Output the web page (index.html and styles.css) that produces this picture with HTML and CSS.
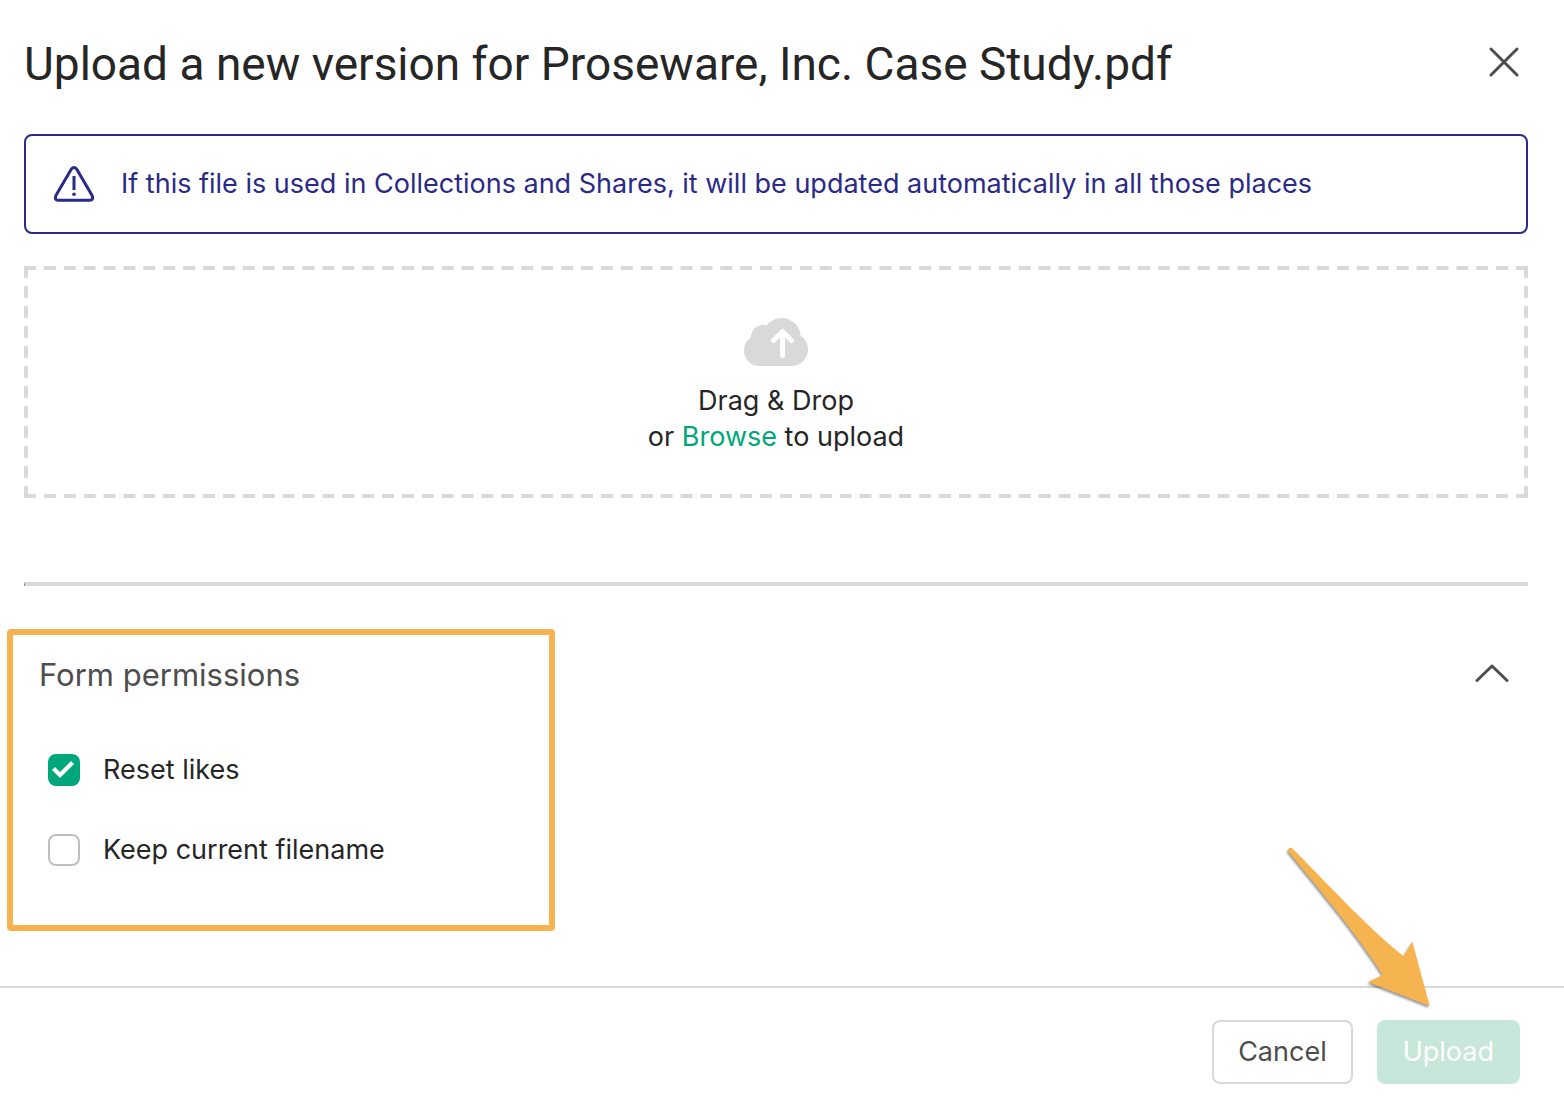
FILE: index.html
```
<!DOCTYPE html>
<html lang="en">
<head>
<meta charset="utf-8">
<meta name="viewport" content="width=device-width, initial-scale=1">
<title>Upload a new version</title>
<link rel="stylesheet" href="styles.css">
</head>
<body>
<main class="dialog">
  <header class="dialog-header">
    <h1 class="title">Upload a new version for Proseware, Inc. Case Study.pdf</h1>
    <button class="icon-button" type="button" aria-label="Close">
      <svg width="32" height="32" viewBox="0 0 32 32" fill="none" stroke="currentColor" stroke-width="3" stroke-linecap="round"><path d="M3 3 29 29M29 3 3 29"/></svg>
    </button>
  </header>

  <div class="content">
    <p class="notice">
      <svg class="notice-icon" width="42" height="38" viewBox="0 0 42 38" fill="none" stroke="currentColor" stroke-width="3" stroke-linejoin="round"><path d="M18.400 4 2.900 30.600Q1.200 35.300 5.200 35.300H36.800Q40.800 35.300 39.100 30.600L23.600 4Q21 .8 18.400 4Z"/><path d="M21 11v14" stroke-linecap="butt"/><circle cx="21" cy="29.300" r="1.800" fill="currentColor" stroke="none"/></svg>
      If this file is used in Collections and Shares, it will be updated automatically in all those places
    </p>

    <section class="dropzone">
      <svg class="dropzone-outline" width="100%" height="100%" aria-hidden="true">
        <line x1="0" y1="0" x2="100%" y2="0" pathLength="1512"/>
        <line x1="0" y1="100%" x2="100%" y2="100%" pathLength="1512"/>
        <line x1="0" y1="0" x2="0" y2="100%" pathLength="232"/>
        <line x1="100%" y1="0" x2="100%" y2="100%" pathLength="232"/>
      </svg>
      <svg width="64" height="48" viewBox="0 0 64 48">
        <g fill="#d9d9d9"><circle cx="15.500" cy="32.500" r="15.500"/><circle cx="19" cy="19" r="12"/><circle cx="37.700" cy="19" r="19"/><circle cx="47.500" cy="31.500" r="16.500"/><path d="M15 20H48V48H15Z"/></g>
        <path d="M38.500 37.500V14M29.500 22.500 38.500 13.500 47.500 22.500" fill="none" stroke="#fff" stroke-width="5" stroke-linecap="round" stroke-linejoin="round"/>
      </svg>
      <p class="dropzone-text">Drag &amp; Drop<br>or <a class="link" href="#">Browse</a> to upload</p>
    </section>

    <hr class="divider">

    <div class="permissions">
      <fieldset class="options">
        <legend class="options-title">Form permissions</legend>
        <label class="option"><input class="checkbox" type="checkbox" checked>Reset likes</label>
        <label class="option"><input class="checkbox" type="checkbox">Keep current filename</label>
      </fieldset>
      <button class="icon-button" type="button" aria-label="Collapse form permissions">
        <svg width="36" height="20" viewBox="0 0 36 20" fill="none" stroke="currentColor" stroke-width="3" stroke-linecap="round" stroke-linejoin="round"><path d="M3 17.500 18 3 33 17.500"/></svg>
      </button>
    </div>
  </div>

  <footer class="dialog-footer">
    <button class="button" type="button">Cancel</button>
    <button class="button button-primary" type="button" disabled>Upload</button>
    <svg class="pointer" width="160" height="170" viewBox="0 0 160 170" aria-hidden="true"><path fill="#f5b450" d="M8.300 10.500C7 7.500 10.500 5.500 13 8C60 56 92 90 123.500 115L132.300 100.500 149.700 165 88 141 102.700 134C78 95 43 53 8.300 10.500Z"/></svg>
  </footer>
</main>
</body>
</html>
```
FILE: styles.css
```
* {
  box-sizing: border-box;
}

body {
  margin: 0;
  background: #fff;
  color: #262626;
  font: 27px/36px Inter, "Liberation Sans", sans-serif;
}

.dialog {
  display: flex;
  flex-direction: column;
  min-height: 100vh;
}

.dialog-header {
  display: flex;
  align-items: flex-start;
  justify-content: space-between;
  padding: 32px 44px 38px 24px;
}

.dialog-header .icon-button {
  padding-top: 14px;
}

.title {
  margin: 0;
  font-family: Roboto, "Liberation Sans", sans-serif;
  font-size: 46px;
  line-height: 64px;
  font-weight: 400;
}

.icon-button {
  display: flex;
  padding: 0;
  border: 0;
  background: none;
  color: #4d4d4d;
}

.content {
  flex: 1;
  padding: 0 36px 0 24px;
}

.notice {
  display: flex;
  align-items: center;
  gap: 26px;
  min-height: 100px;
  margin: 0 0 32px;
  padding: 0 27px;
  border: 2px solid #2b2a86;
  border-radius: 8px;
  color: #2b2a86;
}

.notice-icon {
  flex: none;
}

.dropzone {
  position: relative;
  display: flex;
  flex-direction: column;
  align-items: center;
  gap: 17px;
  padding: 52px 24px 43px;
}

.dropzone-outline {
  position: absolute;
  inset: 0;
  stroke: #d9d9d9;
  stroke-width: 8px;
  stroke-dasharray: 12 8;
}

.dropzone-text {
  margin: 0;
  text-align: center;
}

.link {
  color: #00a67c;
  text-decoration: none;
}

.divider {
  height: 4px;
  margin: 84px 0 43px;
  border: solid #d9d9d9;
  border-width: 3px 0 1px 1px;
  border-left-color: #6f6f6f;
}

.permissions {
  display: flex;
  align-items: flex-start;
  justify-content: space-between;
  margin-left: -17px;
}

.permissions .icon-button {
  padding: 34px 18px 0;
}

.options {
  display: flex;
  flex-direction: column;
  gap: 44px;
  width: 548px;
  margin: 0;
  padding: 20px 26px 57px;
  border: 6px solid #f5b450;
  border-radius: 4px;
}

.options-title {
  float: left;
  margin-bottom: 13px;
  padding: 0;
  color: #4d4d4d;
  font-size: 31px;
  line-height: 40px;
}

.option {
  display: flex;
  align-items: center;
  gap: 23px;
  padding-left: 9px;
}

.checkbox {
  appearance: none;
  width: 32px;
  height: 32px;
  margin: 0;
  border: 2px solid #bfbfbf;
  border-radius: 8px;
}

.checkbox:checked {
  border: 0;
  background: #00a67c;
}

.checkbox:checked::before {
  content: "";
  display: block;
  width: 24px;
  height: 18px;
  margin: 7px 4px;
  background: #fff;
  clip-path: polygon(0 9px, 3px 6px, 8px 11px, 19px 0, 22px 3px, 8px 17px);
}

.dialog-footer {
  position: relative;
  display: flex;
  justify-content: flex-end;
  gap: 24px;
  padding: 32px 44px 20px;
  border-top: 2px solid #d9d9d9;
}

.button {
  height: 64px;
  padding: 0 24px;
  border: 2px solid #d9d9d9;
  border-radius: 8px;
  background: #fff;
  color: #4d4d4d;
  font: inherit;
}

.button-primary {
  border-color: #c6e7d9;
  background: #c6e7d9;
  color: #fff;
}

.pointer {
  position: absolute;
  right: 124px;
  bottom: 93px;
  filter: drop-shadow(-1px 2px 1px rgba(0, 0, 0, 0.4));
}
```
